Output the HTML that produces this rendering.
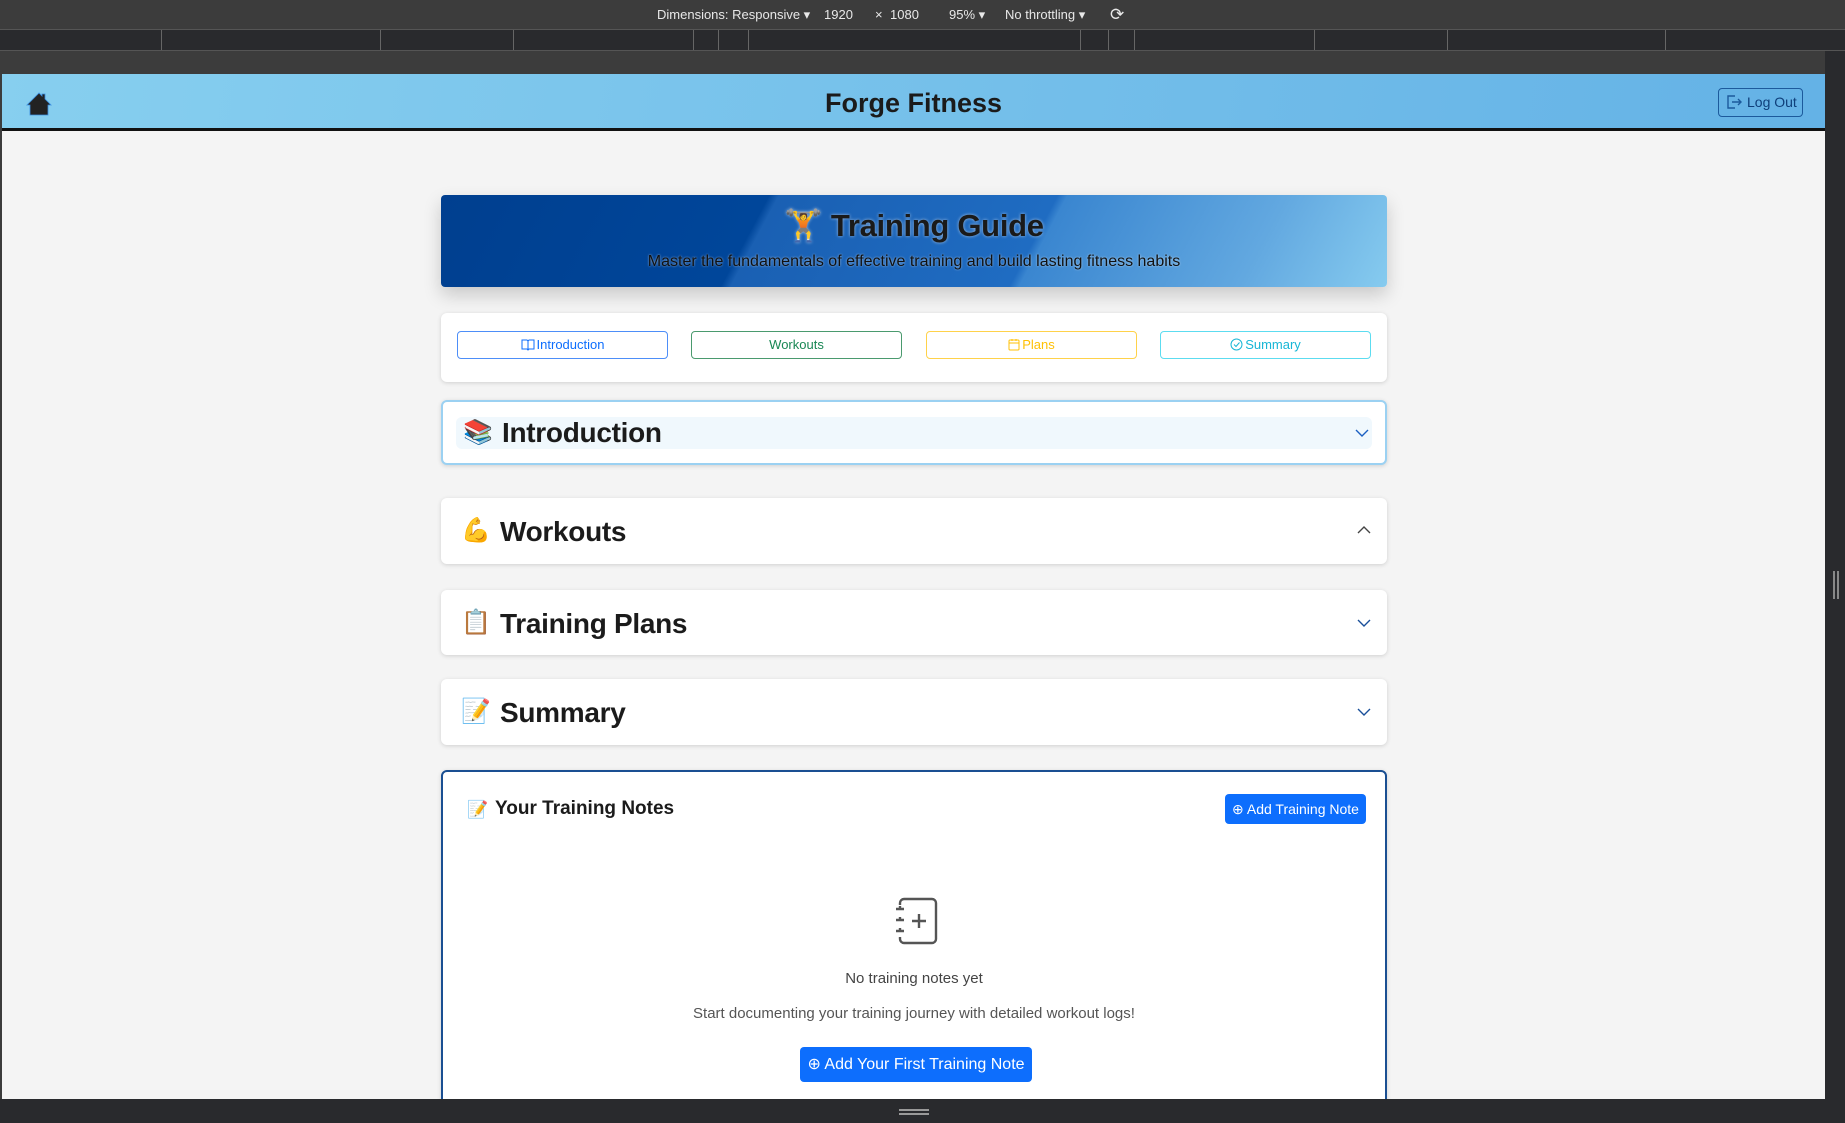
<!DOCTYPE html>
<html><head><meta charset="utf-8"><style>
*{box-sizing:border-box;margin:0;padding:0}
body{width:1845px;height:1123px;overflow:hidden;background:#3c3c3c;font-family:"Liberation Sans",sans-serif;position:relative}
.tb{position:absolute;left:0;top:0;width:1845px;height:29px;background:#3c3c3c;color:#e8e8e8;font-size:13px;line-height:29px}
.tb span{position:absolute;top:0}
.ruler{position:absolute;left:0;top:29px;width:1845px;height:22px;background:#292a2d;border-top:1px solid #555;border-bottom:1px solid #555}
.ruler i{position:absolute;top:0;width:1px;height:20px;background:#666}
.vp{position:absolute;left:2px;top:74px;width:1823px;height:1025px;background:#f4f4f4;overflow:hidden}
.rs{position:absolute;left:1825px;top:51px;width:20px;height:1072px;background:#292a2d}
.bb{position:absolute;left:0;top:1099px;width:1845px;height:24px;background:#292a2d}
.hdr{position:absolute;left:0;top:0;width:1823px;height:57px;background:linear-gradient(100deg,#87cfef,#64b2e6);border-bottom:3px solid #111}
.hdr h1{position:absolute;left:0;right:0;top:14px;text-align:center;font-size:27px;font-weight:bold;color:#1b1b1b}
.lo{position:absolute;left:1716px;top:14px;width:85px;height:29px;border:1.5px solid #1c5a9c;border-radius:4px;color:#0f3f7a;font-size:14px;line-height:26px;padding-left:28px}
.card{position:absolute;left:439px;width:946px;background:#fff;border-radius:6px;box-shadow:0 1px 4px rgba(0,0,0,.15)}
.hero{position:absolute;left:439px;top:121px;width:946px;height:92px;border-radius:4px;background:linear-gradient(118deg,#003f8f 0%,#00469a 33%,#1a60b3 34%,#1f6cc2 62%,#3a86d0 63%,#62a8e0 85%,#86cbef 100%);box-shadow:0 8px 18px rgba(0,0,0,.18);text-align:center;overflow:hidden}
.hero h2{font-size:31px;font-weight:bold;color:#1a1a1a;margin-top:12px;letter-spacing:-0.3px;text-shadow:0 0 3px rgba(255,255,255,.6)}
.hero p{font-size:16px;color:#111;margin-top:9px;text-shadow:0 0 2px rgba(255,255,255,.6)}
.nb{position:absolute;top:18px;width:211px;height:28px;border:1.5px solid;border-radius:4px;text-align:center;font-size:13px;line-height:25px}
.nb svg{vertical-align:-2px;margin-right:2px}
.sec h3{position:absolute;left:59px;font-size:28px;font-weight:bold;color:#1b1b1b;letter-spacing:-0.3px}
.sec .em{position:absolute;left:20px;font-size:24px}
.chev{position:absolute;right:16px;width:14px;height:10px}
.btn{position:absolute;background:#0d6efd;color:#fff;border-radius:4px;text-align:center}
</style></head><body>
<div class="tb"><span style="left:657px">Dimensions: Responsive ▾</span><span style="left:824px">1920</span><span style="left:875px">×</span><span style="left:890px">1080</span><span style="left:949px">95% ▾</span><span style="left:1005px">No throttling ▾</span><span style="left:1110px;font-size:17px">⟳</span></div>
<div class="ruler"><i style="left:161px"></i><i style="left:380px"></i><i style="left:513px"></i><i style="left:693px"></i><i style="left:718px"></i><i style="left:748px"></i><i style="left:1080px"></i><i style="left:1108px"></i><i style="left:1134px"></i><i style="left:1314px"></i><i style="left:1447px"></i><i style="left:1665px"></i></div>
<div class="rs"><div style="position:absolute;left:8px;top:520px;width:2px;height:28px;background:#888"></div><div style="position:absolute;left:12px;top:520px;width:2px;height:28px;background:#888"></div></div>
<div class="bb"><div style="position:absolute;left:899px;top:10px;width:30px;height:2px;background:#999"></div><div style="position:absolute;left:899px;top:14px;width:30px;height:2px;background:#999"></div></div>
<div class="vp">
<div class="hdr">
<svg style="position:absolute;left:24px;top:18px" width="26" height="24" viewBox="0 0 26 24"><path d="M13 1L1 13h3v10h18V13h3L19 7V2h-3v2z" fill="#222" stroke="#3a8de0" stroke-width="0.8"/></svg>
<h1>Forge Fitness</h1>
<div class="lo"><svg style="position:absolute;left:7px;top:6px" width="16" height="14" viewBox="0 0 16 14"><path d="M9 1H2v12h7M6 7h9M12 4l3 3-3 3" fill="none" stroke="#1c5a9c" stroke-width="1.4"/></svg>Log Out</div>
</div>
<div class="hero"><h2>🏋️ Training Guide</h2><p>Master the fundamentals of effective training and build lasting fitness habits</p></div>
<div class="card" style="top:239px;height:69px">
<div class="nb" style="left:16px;border-color:#4d8ef8;color:#0d6efd"><svg width="14" height="12" viewBox="0 0 14 12"><path d="M1 1h5l1 1 1-1h5v9H8l-1 1-1-1H1zM7 2v9" fill="none" stroke="#0d6efd" stroke-width="1"/></svg>Introduction</div>
<div class="nb" style="left:250px;border-color:#4a9a6e;color:#198754">Workouts</div>
<div class="nb" style="left:485px;border-color:#ffd24a;color:#ffc107"><svg width="12" height="13" viewBox="0 0 12 13"><rect x="1" y="2" width="10" height="10" rx="1" fill="none" stroke="#ffc107"/><path d="M1 5h10M4 1v2M8 1v2" stroke="#ffc107"/></svg>Plans</div>
<div class="nb" style="left:719px;border-color:#5cdcf0;color:#17b6d6"><svg width="13" height="13" viewBox="0 0 13 13"><circle cx="6.5" cy="6.5" r="5.5" fill="none" stroke="#17b6d6"/><path d="M4 6.5l2 2 3.5-4" fill="none" stroke="#17b6d6"/></svg>Summary</div>
</div>
<div class="card sec" style="top:326px;height:65px;border:2px solid #9bd1f2">
<div style="position:absolute;left:13px;top:15px;width:916px;height:32px;background:#f0f8fd;border-radius:6px"></div>
<span class="em" style="top:16px">📚</span><h3 style="top:15px">Introduction</h3>
<svg class="chev" style="top:26px" viewBox="0 0 14 10"><path d="M1 2l6 6 6-6" fill="none" stroke="#1a5fc2" stroke-width="1.4"/></svg>
</div>
<div class="card sec" style="top:424px;height:66px">
<span class="em" style="top:18px">💪</span><h3 style="top:18px">Workouts</h3>
<svg class="chev" style="top:27px" viewBox="0 0 14 10"><path d="M1 8l6-6 6 6" fill="none" stroke="#444" stroke-width="1.4"/></svg>
</div>
<div class="card sec" style="top:516px;height:65px">
<span class="em" style="top:18px">📋</span><h3 style="top:18px">Training Plans</h3>
<svg class="chev" style="top:28px" viewBox="0 0 14 10"><path d="M1 2l6 6 6-6" fill="none" stroke="#1a4f9a" stroke-width="1.4"/></svg>
</div>
<div class="card sec" style="top:605px;height:66px">
<span class="em" style="top:18px">📝</span><h3 style="top:18px">Summary</h3>
<svg class="chev" style="top:28px" viewBox="0 0 14 10"><path d="M1 2l6 6 6-6" fill="none" stroke="#1a4f9a" stroke-width="1.4"/></svg>
</div>
<div class="card" style="top:696px;height:360px;border:2px solid #1a4f92">
<span style="position:absolute;left:24px;top:28px;font-size:17px">📝</span>
<div style="position:absolute;left:52px;top:26px;font-size:19px;font-weight:bold;color:#1b1b1b">Your Training Notes</div>
<div class="btn" style="left:782px;top:22px;width:141px;height:30px;font-size:14px;line-height:30px">⊕ Add Training Note</div>
<svg style="position:absolute;left:452px;top:125px" width="44" height="48" viewBox="0 0 44 48"><rect x="5" y="2" width="36" height="44" rx="4" fill="none" stroke="#555" stroke-width="2.4"/><rect x="0" y="8" width="9" height="32" fill="#fff"/><path d="M1 12h8M1 23h8M1 34h8M5 9v3M5 20v3M5 31v3" stroke="#555" stroke-width="2.4"/><path d="M17 24h14M24 17v14" stroke="#555" stroke-width="2.4"/></svg>
<div style="position:absolute;left:0;right:0;top:198px;text-align:center;font-size:15px;color:#444">No training notes yet</div>
<div style="position:absolute;left:0;right:0;top:233px;text-align:center;font-size:15px;color:#555">Start documenting your training journey with detailed workout logs!</div>
<div class="btn" style="left:357px;top:275px;width:232px;height:35px;font-size:16px;line-height:35px">⊕ Add Your First Training Note</div>
</div>
</div>
</body></html>
